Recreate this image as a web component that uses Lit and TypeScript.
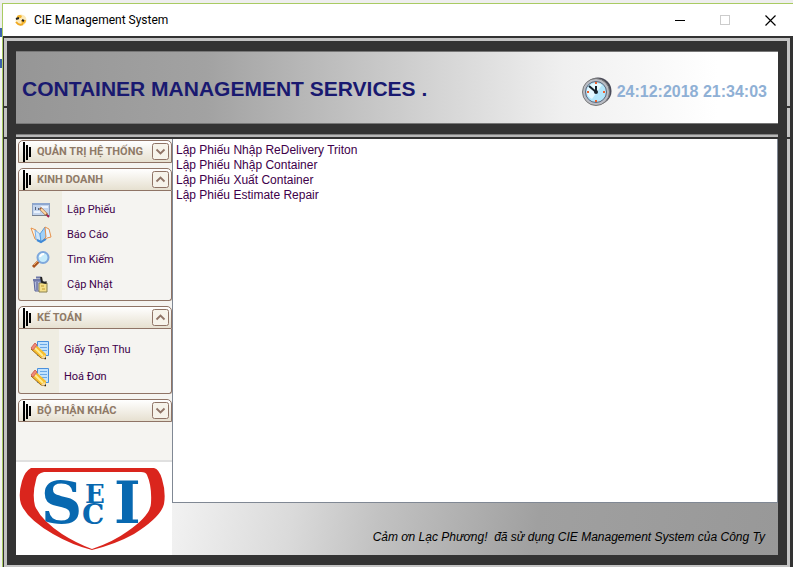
import { LitElement, html, css, svg } from "lit";
import { customElement, state } from "lit/decorators.js";

type Item = { label: string; icon: unknown };
type Group = { title: string; open: boolean; kind: string; items: Item[] };

const formIcon = svg`<svg viewBox="0 0 20 16" width="20" height="16">
  <rect x="1.500" y="1.500" width="17" height="12" fill="#c3d4ec" stroke="#8fa3c2"/>
  <rect x="2" y="1" width="16" height="2" fill="#8ea8d0"/><path d="M1 13h17v1H1z" fill="#77808f"/>
  <path d="M4.500 5v3M7.500 6v2" stroke="#54657f"/><path d="M10 5h7M3 10h6" stroke="#eaf2fc" stroke-width="2"/>
  <path d="M9 6l7 7" stroke="#9a5a30" stroke-width="3"/><path d="M10 7l5 5" stroke="#ffd9a4" stroke-width="2"/>
  <path d="M16 13l2 2" stroke="#a02050" stroke-width="2"/></svg>`;
const mapIcon = svg`<svg viewBox="0 0 22 18" width="22" height="18">
  <path d="M1 2l5 2 1 9 3 2-5-2z" fill="#fdf3e4" stroke="#e8924a"/>
  <path d="M5 4l5 4 1 8-5-3z" fill="#cfe6fa" stroke="#78b0e8"/>
  <path d="M10 8l5-7 1 10-5 5z" fill="#9fd0f8" stroke="#5b9fe0"/>
  <path d="M15 1l4 2 2 8-4 1-6 4 5-5z" fill="#e9f4fe" stroke="#e8924a"/>
  <path d="M7 14l4 2 5-3" fill="none" stroke="#3f8ad8" stroke-width="2"/></svg>`;
const findIcon = svg`<svg viewBox="0 0 20 18" width="20" height="18">
  <path d="M9 9L2 16" stroke="#a8531f" stroke-width="3"/><path d="M8 9L3 14" stroke="#f0a860"/>
  <circle cx="12" cy="6.500" r="5.500" fill="#c6ecfb" stroke="#7fa8dc" stroke-width="2"/>
  <path d="M9 6q1-3 4-3" stroke="#fff" fill="none" stroke-width="2"/></svg>`;
const updateIcon = svg`<svg viewBox="0 0 20 18" width="20" height="18">
  <path d="M3 5h7v10H4z" fill="#b3bbdc" stroke="#5b659a"/><path d="M6 6v8" stroke="#4c5588"/>
  <path d="M2 4h9M5 1.500h5" stroke="#6e78a8" stroke-width="2"/>
  <path d="M8 7h8v9H8z" fill="#f5e08a" stroke="#8a8250"/><path d="M10 1l1 5 4 1" stroke="#222" fill="none" stroke-width="2"/>
  <path d="M10 10h3M11 13h3" stroke="#c09a30"/><path d="M15 5v3" stroke="#333"/></svg>`;
const noteIcon = svg`<svg viewBox="0 0 20 20" width="20" height="20">
  <path d="M7.500 1.500h11v14h-11z" fill="#c2e2fc" stroke="#4a90dc"/><path d="M10 4.500h7M10 7.500h7M11 10.500h6" stroke="#6aa8e6"/>
  <path d="M5 4l11 10v5l-5-1L1 9z" fill="#f6bd2f"/><path d="M1 9l10 9 5 1" fill="none" stroke="#a06a18"/>
  <path d="M4 7l9 9" stroke="#ffec94" stroke-width="2"/>
  <path d="M1 8l4-5 2 2-4 5z" fill="#f08a78" stroke="#d0695a"/><path d="M11 18l4-3 1 4z" fill="#f3dcae"/><path d="M14 19h2v-2z" fill="#222"/></svg>`;

@customElement("app-root")
export class AppRoot extends LitElement {
  static styles = css`
    :host { display: block; box-sizing: border-box; min-height: 100vh; padding: 3px 0 0 2px; background: linear-gradient(#eee 28px, #3c62ab 28px 37px, #fff 37px 59px, #3c62ab 59px 68px, #f2f2f2 68px) 0 0 / 2px 100% no-repeat #eee; font: 12px/15px "Liberation Sans", sans-serif; }
    * { box-sizing: border-box; }
    button { padding: 0; border: 0; background: none; font: inherit; color: inherit; }
    .window { display: flex; flex-direction: column; height: calc(100vh - 3px); border: solid #a9cb62; border-width: 1px 0 0 1px; background: #fff; overflow: hidden; }
    .titlebar { display: flex; align-items: center; flex: 0 0 32px; padding-left: 12px; color: #000; font: 12px/16px Roboto, sans-serif; }
    .titlebar svg { display: block; }
    .titlebar .name { margin: 0 auto 0 7px; font: inherit; }
    .win { display: grid; place-items: center; width: 45px; height: 30px; }
    .frame { position: relative; flex: 1; min-height: 0; display: flex; padding: 2px 3px 0 1px; background: #333; }
    .notch { position: absolute; left: 0; right: 0; height: 2px; background: #333; }
    .notch.upper { top: 70px; }
    .notch.lower { top: 101px; }
    .rim { flex: 1; min-width: 0; display: flex; flex-direction: column; border: 3px solid #c4c4c4; border-bottom-width: 2px; padding: 10px 9px; background: #333; }
    .banner { position: relative; z-index: 1; display: flex; align-items: center; flex: 0 0 73px; padding: 2px 11px 0 6px; border: 1px solid #777; border-width: 1px 0; background: linear-gradient(to right, #969696, #a2a2a2 25%, #f0f0f0 72%, #fff 92%); }
    .banner h1 { margin: 0 auto 0 0; color: #191970; font: bold 21px/26px "Liberation Sans", sans-serif; white-space: nowrap; }
    .clock { display: flex; align-items: center; gap: 5px; padding-top: 6px; }
    .clock time { color: #8fb0d5; font: bold 16px/20px "Liberation Sans", sans-serif; white-space: nowrap; }
    .rule { position: relative; z-index: 1; flex: 0 0 3px; margin: 10px 0 2px; border-top: 1px solid #808080; background: #b8b8b8; }
    .body { flex: 1; min-height: 0; display: grid; grid-template-columns: 156px 1fr; grid-template-rows: 1fr 52px; background: #f5f4f1; }
    .side { grid-row: 1 / 3; display: flex; flex-direction: column; }
    nav { display: flex; flex-direction: column; gap: 5px; padding: 1px 0 0 2px; }
    .head { display: flex; align-items: center; width: 100%; height: 23px; padding: 0 2px 0 4px; border: 1px solid #8f7466; border-radius: 5px 5px 0 0; background: linear-gradient(#fff, #e6e0d0); color: #8f7a67; font: bold 11px/16px Roboto, sans-serif; text-align: left; white-space: nowrap; }
    .head .text { flex: 1; min-width: 0; margin-left: 5px; }
    .head svg { display: block; flex: none; }
    .items { display: flex; flex-direction: column; margin: 0; padding: 6px 0 3px; list-style: none; border: 1px solid #8f7466; border-top: 0; border-radius: 0 0 3px 3px; background: linear-gradient(to right, #efede2 43px, #f5f4f1 43px); }
    .items a { display: grid; grid-template-columns: 44px 1fr; align-items: center; height: 25px; column-gap: 4px; color: #40004a; font: 11px/16px Roboto, sans-serif; text-decoration: none; }
    .items svg { display: block; justify-self: center; }
    .items.narrow { padding: 7px 0 3px; background: linear-gradient(to right, #efede2 40px, #f5f4f1 40px); }
    .items.narrow a { grid-template-columns: 42px 1fr; height: 27px; column-gap: 3px; }
    .logo { margin-top: auto; height: 95px; border-top: 2px solid #e0e0e0; background: #fff; }
    .logo svg { display: block; }
    .logo text { font-family: "DejaVu Serif", serif; font-weight: bold; fill: #0868b0; }
    .list { margin: 0; padding: 4px 3px; border: solid #808894; border-width: 0 1px 1px; background: #fff; list-style: none; }
    .list a { display: block; color: #40004a; text-decoration: none; }
    .foot { display: flex; align-items: center; justify-content: flex-end; margin: 0; padding: 16px 13px 0 0; background: linear-gradient(100deg, #f2f2f2, #dadada 20%, #c2c2c2 34%, #a0a0a0 60%, #989898); color: #000; font: italic 12px/16px "Liberation Sans", sans-serif; white-space: pre; }
  `;

  @state() private groups: Group[] = [
    { title: "QUẢN TRỊ HỆ THỐNG", open: false, kind: "", items: [] },
    { title: "KINH DOANH", open: true, kind: "", items: [
      { label: "Lập Phiếu", icon: formIcon }, { label: "Báo Cáo", icon: mapIcon },
      { label: "Tìm Kiếm", icon: findIcon }, { label: "Cập Nhật", icon: updateIcon } ] },
    { title: "KẾ TOÁN", open: true, kind: "narrow", items: [
      { label: "Giấy Tạm Thu", icon: noteIcon }, { label: "Hoá Đơn", icon: noteIcon } ] },
    { title: "BỘ PHẬN KHÁC", open: false, kind: "", items: [] },
  ];

  private toggle(g: Group) {
    this.groups = this.groups.map((x) => (x === g ? { ...x, open: !x.open } : x));
  }

  private group(g: Group) {
    return html`<section>
      <button class="head" aria-expanded=${g.open} @click=${() => this.toggle(g)}>
        <svg width="9" height="20" viewBox="0 0 9 20"><path d="M1 0v20M4 3v15M7 5v10" stroke="#000" stroke-width="2"/></svg>
        <span class="text">${g.title}</span>
        <svg width="17" height="17" viewBox="0 0 17 17"><rect x=".5" y=".5" width="16" height="16" rx="2" fill="#f6f3ea" stroke="#8f7466"/>
          <path d=${g.open ? "M4.500 10.500l4-4 4 4" : "M4.500 6.500l4 4 4-4"} fill="none" stroke="#8f7466" stroke-width="1.800"/></svg>
      </button>
      ${g.open && g.items.length ? html`<ul class="items ${g.kind}">
        ${g.items.map((i) => html`<li><a href="#">${i.icon}<span>${i.label}</span></a></li>`)}</ul>` : ""}
    </section>`;
  }

  render() {
    const tasks = ["Lập Phiếu Nhập ReDelivery Triton", "Lập Phiếu Nhập Container", "Lập Phiếu Xuất Container", "Lập Phiếu Estimate Repair"];
    return html`<div class="window">
      <header class="titlebar">
        <svg width="12" height="12" viewBox="0 0 12 12"><circle cx="6" cy="6" r="5.500" fill="#fbe9bb"/><path d="M2 2q3-2 5 0l-1 2H2z" fill="#f5b52e"/><path d="M6 6h5q0 4-4 4z" fill="#f5b52e"/><path d="M1 8q3 4 7 2" stroke="#f0a820" stroke-width="2" fill="none"/><path d="M1 5l3-1M7 6l2 1" stroke="#222" stroke-width="2"/></svg>
        <span class="name">CIE Management System</span>
        <button class="win" aria-label="Minimize"><svg width="11" height="11"><path d="M0 5.500h10" stroke="#000"/></svg></button>
        <button class="win" aria-label="Maximize" disabled><svg width="11" height="11"><rect x=".5" y=".5" width="9" height="9" fill="none" stroke="#ccc"/></svg></button>
        <button class="win" aria-label="Close"><svg width="11" height="11"><path d="M.5.5l10 10M10.500.5l-10 10" stroke="#000" stroke-width="1.200"/></svg></button>
      </header>
      <div class="frame">
        <div class="rim">
          <div class="banner">
            <h1>CONTAINER MANAGEMENT SERVICES .</h1>
            <div class="clock">
              <svg width="30" height="30" viewBox="0 0 30 30"><circle cx="16" cy="14" r="13.500" fill="#4a4a58"/><circle cx="14" cy="15" r="13.500" fill="#b9bcc4" stroke="#777"/><circle cx="14" cy="15" r="10.500" fill="#b4e6fb" stroke="#59677c"/><path d="M5 13a9.500 9.500 0 0 1 15-5l-10 14a9 9 0 0 1-5-9" fill="#e4f8ff"/><path d="M14 15V9M14 15L7 9" stroke="#17232d" stroke-width="2"/><circle cx="14" cy="15" r="2" fill="#17232d"/><path d="M13 6h2M13 24h2M5 15h2M21 15h2" stroke="#f0602c" stroke-width="2"/></svg>
              <time datetime="2018-12-24T21:34:03">24:12:2018 21:34:03</time>
            </div>
          </div>
          <div class="rule"></div>
          <div class="body">
            <div class="side">
              <nav>${this.groups.map((g) => this.group(g))}</nav>
              <div class="logo"><svg width="156" height="93" viewBox="0 0 156 93" role="img" aria-label="SECI">
                <path fill="#da251d" fill-rule="evenodd" d="M15 6H138Q143 7 146 17Q150 30 148 42Q145 55 118 72Q100 82 76 88Q56 83 37 72Q11 57 5 42Q2 33 6 19Q9 9 15 6ZM28 10Q21 11 20 18Q16 32 19 44Q25 58 46 72Q60 81 76 87Q97 80 112 69Q135 53 135 41Q136 24 131 13Q130 10 125 10Z"/>
                <text><tspan x="25" y="61" font-size="57">S</tspan><tspan x="69" y="41" font-size="26">E</tspan><tspan x="66" y="62" font-size="28">C</tspan><tspan x="98" y="61" font-size="57">I</tspan></text></svg></div>
            </div>
            <ul class="list">${tasks.map((t) => html`<li><a href="#">${t}</a></li>`)}</ul>
            <p class="foot">Cảm ơn Lạc Phương!  đã sử dụng CIE Management System của Công Ty</p>
          </div>
        </div>
        <div class="notch upper"></div><div class="notch lower"></div>
      </div>
    </div>`;
  }
}
